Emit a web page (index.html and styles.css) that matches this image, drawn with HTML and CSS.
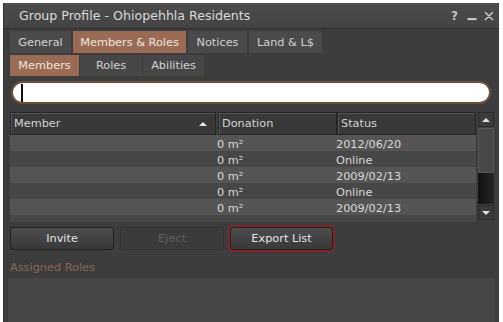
FILE: index.html
```html
<!DOCTYPE html>
<html>
<head>
<meta charset="utf-8">
<link rel="stylesheet" href="styles.css">
</head>
<body>
<div class="window">
  <div class="titlebar">
    <span class="title">Group Profile - Ohiopehhla Residents</span>
    <div class="controls">
      <span class="help">?</span>
      <svg class="ctl" width="10" height="10" viewBox="0 0 10 10"><rect x="0.5" y="7" width="9" height="2.2" fill="#c4c4c4"/></svg>
      <svg class="ctl" width="10" height="10" viewBox="0 0 10 10"><path d="M1.5 1.5 L8.5 8.5 M8.5 1.5 L1.5 8.5" stroke="#c4c4c4" stroke-width="1.6" stroke-linecap="round"/></svg>
    </div>
  </div>
  <div class="content">
    <div class="tabs tabs-main">
      <div class="tab w-general">General</div>
      <div class="tab active w-mr">Members &amp; Roles</div>
      <div class="tab w-notices">Notices</div>
      <div class="tab w-land">Land &amp; L$</div>
    </div>
    <div class="tabs tabs-sub">
      <div class="tab active w-members">Members</div>
      <div class="tab sub w-roles">Roles</div>
      <div class="tab sub w-abilities">Abilities</div>
    </div>
    <div class="search"><span class="caret"></span></div>
    <div class="list-wrap">
      <div class="list">
        <div class="header">
          <div class="hcell h-member">Member<span class="sort"></span></div>
          <div class="hcell h-donation">Donation</div>
          <div class="hcell h-status">Status</div>
        </div>
        <div class="row light"><span></span><span>0 m²</span><span>2012/06/20</span></div>
        <div class="row dark"><span></span><span>0 m²</span><span>Online</span></div>
        <div class="row light"><span></span><span>0 m²</span><span>2009/02/13</span></div>
        <div class="row dark"><span></span><span>0 m²</span><span>Online</span></div>
        <div class="row light"><span></span><span>0 m²</span><span>2009/02/13</span></div>
        <div class="row dark partial"></div>
      </div>
      <div class="scrollbar">
        <div class="sb-btn"><span class="tri-up"></span></div>
        <div class="sb-thumb"></div>
        <div class="sb-track"></div>
        <div class="sb-btn"><span class="tri-down"></span></div>
      </div>
    </div>
    <div class="buttons">
      <div class="btn">Invite</div>
      <div class="btn disabled">Eject</div>
      <div class="btn focused">Export List</div>
    </div>
    <div class="label">Assigned Roles</div>
    <div class="roles-box"></div>
  </div>
</div>
</body>
</html>
```

FILE: styles.css
```css
html, body {
  margin: 0;
  padding: 0;
  background: #ffffff;
}
body {
  font-family: "DejaVu Sans", sans-serif;
  font-size: 11.3px;
  color: #d6d6d6;
}
.window {
  margin: 3px 0 0 3px;
  width: 496px;
  height: 319px;
  background: #3d3d3d;
  overflow: hidden;
  border-left: 1px solid #333;
  box-sizing: border-box;
}
.titlebar {
  height: 25px;
  background: linear-gradient(#4c4c4c, #444444);
  border-bottom: 1px solid #2f2f2f;
  display: flex;
  align-items: center;
  justify-content: space-between;
  padding: 0 5px 0 15px;
}
.title {
  font-size: 12.6px;
  color: #dadada;
}
.controls {
  display: flex;
  align-items: center;
  gap: 7px;
}
.help {
  font-weight: bold;
  font-size: 12px;
  color: #c4c4c4;
  margin-right: 2px;
}
.content {
  padding: 2px 0 0 6px;
}
.tabs {
  display: flex;
}
.tabs-main {
  gap: 2px;
  height: 22px;
}
.tabs-sub {
  gap: 1px;
  height: 21px;
  margin-top: 2px;
}
.tab {
  background: #4a4a4a;
  color: #d2d2d2;
  display: flex;
  align-items: center;
  justify-content: center;
}
.tab.sub {
  background: #474747;
}
.tab.active {
  background: #9b6c55;
  color: #eee4de;
}
.w-general { width: 61px; }
.w-mr { width: 113px; }
.w-notices { width: 59px; }
.w-land { width: 73px; }
.w-members { width: 69px; }
.w-roles { width: 62px; }
.w-abilities { width: 61px; }

.search {
  margin: 5px 0 0 1px;
  width: 480px;
  height: 23px;
  box-sizing: border-box;
  background: #ffffff;
  border: 2px solid #6c4e3b;
  border-radius: 12px;
  display: flex;
  align-items: center;
  padding-left: 8px;
}
.caret {
  width: 2px;
  height: 18px;
  background: #111;
}
.list-wrap {
  margin-top: 8px;
  height: 110px;
  display: flex;
  gap: 2px;
  overflow: hidden;
}
.list {
  width: 466px;
  overflow: hidden;
}
.header {
  display: flex;
  height: 23px;
}
.hcell {
  box-sizing: border-box;
  background: #393939;
  border: 1px solid #262626;
  box-shadow: inset 1px 1px 0 #555555;
  display: flex;
  align-items: center;
  padding-left: 3px;
  color: #d2d2d2;
}
.h-member {
  width: 206px;
  margin-right: 2px;
  justify-content: space-between;
  padding-right: 8px;
}
.h-donation {
  width: 119px;
}
.h-status {
  flex: 1;
}
.sort {
  width: 0;
  height: 0;
  border-left: 4px solid transparent;
  border-right: 4px solid transparent;
  border-bottom: 4px solid #e6e6e6;
}
.row {
  display: grid;
  grid-template-columns: 207px 119px 1fr;
  height: 16px;
  box-sizing: border-box;
  padding-top: 2px;
  line-height: 15px;
  color: #d8d8d8;
  white-space: nowrap;
  overflow: hidden;
}
.row.light { background: #555555; }
.row.dark { background: #474747; }
.row.partial {
  background: linear-gradient(#474747 0 5px, #474747 5px);
}

.scrollbar {
  width: 16px;
  display: flex;
  flex-direction: column;
  height: 108px;
}
.sb-btn {
  height: 15px;
  background: #3a3a3a;
  border: 1px solid #2c2c2c;
  box-sizing: border-box;
  display: flex;
  align-items: center;
  justify-content: center;
}
.tri-up {
  width: 0; height: 0;
  border-left: 4px solid transparent;
  border-right: 4px solid transparent;
  border-bottom: 4px solid #e0e0e0;
}
.tri-down {
  width: 0; height: 0;
  border-left: 4px solid transparent;
  border-right: 4px solid transparent;
  border-top: 4px solid #e0e0e0;
}
.sb-thumb {
  margin-top: 1px;
  height: 45px;
  background: #484848;
  border: 1px solid #5a5a5a;
  border-radius: 2px;
  box-sizing: border-box;
}
.sb-track {
  flex: 1;
  background: linear-gradient(90deg, #111111, #262626);
  margin-bottom: 1px;
}
.buttons {
  display: flex;
  gap: 6px;
  margin-top: 5px;
  height: 23px;
}
.btn {
  width: 104px;
  box-sizing: border-box;
  background: linear-gradient(#4c4c4c, #393939);
  border: 1px solid #222;
  border-radius: 3px;
  color: #e4e4e4;
  display: flex;
  align-items: center;
  justify-content: center;
}
.btn.disabled {
  background: #3b3b3b;
  border-color: #333;
  color: #5f5f5f;
}
.btn.focused {
  width: 103px;
  box-shadow: 0 0 0 2px #85232a;
}
.label {
  margin-top: 11px;
  height: 14px;
  line-height: 14px;
  color: #8a6450;
}
.roles-box {
  margin: 3px 0 0 -2px;
  width: 487px;
  height: 60px;
  background: #464646;
}
```
